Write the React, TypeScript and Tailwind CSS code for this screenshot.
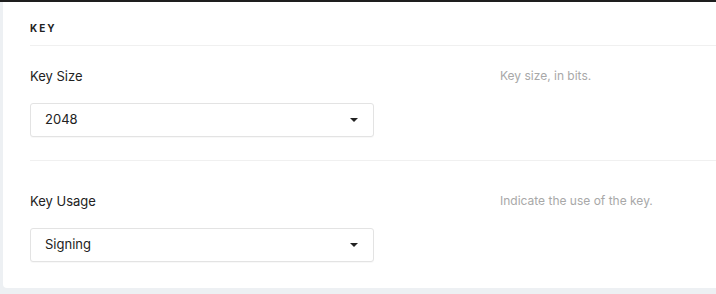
import React from "react";

function Caret() {
  return (
    <svg width="8" height="4" viewBox="0 0 8 4" className="shrink-0">
      <path d="M0 0 H8 L4 4 Z" fill="#222" />
    </svg>
  );
}

function Select({ value }: { value: string }) {
  return (
    <div className="flex h-[34px] w-[344px] items-center justify-between rounded-[3px] border border-[#e3e3e3] bg-white pl-[14px] pr-[15px] text-[13px] text-[#222] shadow-[0_1px_1px_rgba(0,0,0,0.03)]">
      <span>{value}</span>
      <Caret />
    </div>
  );
}

function Row({
  label,
  help,
  value,
  pt,
  pb,
  divider,
}: {
  label: string;
  help: string;
  value: string;
  pt: string;
  pb: string;
  divider: boolean;
}) {
  return (
    <div className={`${pt} ${pb} ${divider ? "border-b border-[#f0f0f0]" : ""} flex`}>
      <div className="flex w-[470px] flex-col gap-[18px]">
        <div className="h-[18px] text-[13px] leading-[18px] text-[#222]">{label}</div>
        <Select value={value} />
      </div>
      <div className="h-[18px] text-[12px] leading-[18px] text-[#a8a8a8]">{help}</div>
    </div>
  );
}

export default function App() {
  return (
    <div
      className="flex h-[294px] w-[716px] flex-col overflow-hidden bg-[#edf0f3]"
      style={{ fontFamily: "Inter, 'Noto Sans', sans-serif" }}
    >
      <div className="h-[2px] bg-[#1e1e1e]" />
      <div className="ml-[3px] h-[286px] rounded-bl-[4px] bg-white pl-[27px]">
        <div className="border-b border-[#f0f0f0] pb-[11px] pt-[20px] text-[10px] font-bold leading-[12px] tracking-[0.2em] text-[#222]">
          KEY
        </div>
        <Row label="Key Size" help="Key size, in bits." value="2048" pt="pt-[21px]" pb="pb-[23px]" divider={true} />
        <Row label="Key Usage" help="Indicate the use of the key." value="Signing" pt="pt-[31px]" pb="pb-[24px]" divider={false} />
      </div>
    </div>
  );
}
